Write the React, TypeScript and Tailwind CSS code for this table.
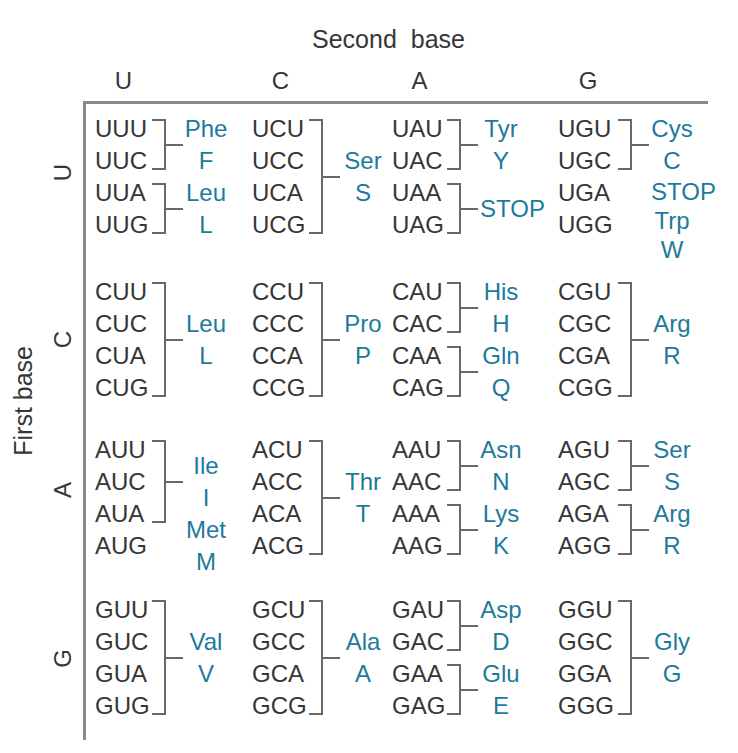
import React from 'react';

type G = { c: string[]; aa: string[]; b?: boolean; top?: boolean };

const H: Record<number, string> = {
  1: 'h-[32px]',
  2: 'h-[64px]',
  3: 'h-[96px]',
  4: 'h-[128px]',
};

const data: G[][][] = [
  [
    [
      { c: ['UUU', 'UUC'], aa: ['Phe', 'F'] },
      { c: ['UUA', 'UUG'], aa: ['Leu', 'L'] },
    ],
    [{ c: ['UCU', 'UCC', 'UCA', 'UCG'], aa: ['Ser', 'S'] }],
    [
      { c: ['UAU', 'UAC'], aa: ['Tyr', 'Y'] },
      { c: ['UAA', 'UAG'], aa: ['STOP'] },
    ],
    [
      { c: ['UGU', 'UGC'], aa: ['Cys', 'C'] },
      { c: ['UGA', 'UGG'], aa: ['STOP', 'Trp', 'W'], b: false, top: true },
    ],
  ],
  [
    [{ c: ['CUU', 'CUC', 'CUA', 'CUG'], aa: ['Leu', 'L'] }],
    [{ c: ['CCU', 'CCC', 'CCA', 'CCG'], aa: ['Pro', 'P'] }],
    [
      { c: ['CAU', 'CAC'], aa: ['His', 'H'] },
      { c: ['CAA', 'CAG'], aa: ['Gln', 'Q'] },
    ],
    [{ c: ['CGU', 'CGC', 'CGA', 'CGG'], aa: ['Arg', 'R'] }],
  ],
  [
    [
      { c: ['AUU', 'AUC', 'AUA'], aa: ['Ile', 'I'] },
      { c: ['AUG'], aa: ['Met', 'M'], b: false },
    ],
    [{ c: ['ACU', 'ACC', 'ACA', 'ACG'], aa: ['Thr', 'T'] }],
    [
      { c: ['AAU', 'AAC'], aa: ['Asn', 'N'] },
      { c: ['AAA', 'AAG'], aa: ['Lys', 'K'] },
    ],
    [
      { c: ['AGU', 'AGC'], aa: ['Ser', 'S'] },
      { c: ['AGA', 'AGG'], aa: ['Arg', 'R'] },
    ],
  ],
  [
    [{ c: ['GUU', 'GUC', 'GUA', 'GUG'], aa: ['Val', 'V'] }],
    [{ c: ['GCU', 'GCC', 'GCA', 'GCG'], aa: ['Ala', 'A'] }],
    [
      { c: ['GAU', 'GAC'], aa: ['Asp', 'D'] },
      { c: ['GAA', 'GAG'], aa: ['Glu', 'E'] },
    ],
    [{ c: ['GGU', 'GGC', 'GGA', 'GGG'], aa: ['Gly', 'G'] }],
  ],
];

const codonW = ['w-[57px]', 'w-[57px]', 'w-[55px]', 'w-[60px]'];
const rowMt = ['', 'mt-[35px]', 'mt-[30px]', 'mt-[32px]'];
const bases = ['U', 'C', 'A', 'G'];
const labelPad = ['pb-[8px]', '', 'pb-[16px]', ''];

function Group({ g, cw }: { g: G; cw: string }) {
  const n = g.c.length;
  const bracket = g.b !== false;
  return (
    <div className={`flex shrink-0 ${H[n]}`}>
      <div className={`${cw} flex flex-col text-[#363636]`}>
        {g.c.map((c) => (
          <div key={c} className="h-[32px] leading-[32px] whitespace-nowrap">
            {c}
          </div>
        ))}
      </div>
      <div className="w-[14px] pt-[6px] pb-[7px]">
        {bracket && <div className="h-full border-y-2 border-r-2 border-[#676767]" />}
      </div>
      <div className="w-[17px] flex items-center">
        {bracket && <div className="h-[2px] w-full bg-[#676767]" />}
      </div>
      <div
        className={`w-[46px] flex flex-col items-center ${
          g.top ? 'justify-start' : 'justify-center'
        } text-[#1d7a9b]`}
      >
        {g.aa.map((a) => (
          <div
            key={a}
            className={`shrink-0 whitespace-nowrap ${
              g.top ? 'h-[29px] leading-[29px]' : 'h-[32px] leading-[32px]'
            } ${a === 'STOP' ? 'self-start ml-[2px]' : ''}`}
          >
            {a}
          </div>
        ))}
      </div>
    </div>
  );
}

export default function App() {
  return (
    <div className="w-[738px] h-[753px] bg-white overflow-hidden font-['Liberation_Sans',Arial,Helvetica,sans-serif] text-[24px] text-[#363636]">
      <div className="pt-[23px] pl-[312px] flex gap-[14px] text-[25px] leading-[32px] h-[55px]">
        <span>Second</span>
        <span>base</span>
      </div>
      <div className="mt-[10px] ml-[86px] pl-[9px] grid grid-cols-[157px_140px_166px_150px] h-[32px] leading-[32px]">
        {bases.map((b, i) => (
          <div key={b} className={`${codonW[i]} text-center`}>
            {b}
          </div>
        ))}
      </div>
      <div className="mt-[4px] flex">
        <div className="w-[83px] h-[639px] flex">
          <div className="w-[46px] pt-[245px] flex justify-center items-start">
            <span className="[writing-mode:vertical-rl] rotate-180 text-[25px] leading-[28px] whitespace-nowrap">
              First base
            </span>
          </div>
          <div className="w-[34px] pt-[12px] flex flex-col">
            {bases.map((b, i) => (
              <div
                key={b}
                className={`h-[128px] flex items-center justify-center ${rowMt[i]} ${labelPad[i]}`}
              >
                <span className="[writing-mode:vertical-rl] rotate-180 leading-[24px]">{b}</span>
              </div>
            ))}
          </div>
        </div>
        <div className="w-[625px] h-[639px] border-t-[3px] border-l-[3px] border-[#8a8a8a] pl-[9px] pt-[9px]">
          {data.map((row, ri) => (
            <div
              key={ri}
              className={`grid grid-cols-[157px_140px_166px_150px] h-[128px] ${rowMt[ri]}`}
            >
              {row.map((cell, ci) => (
                <div key={ci} className="flex flex-col">
                  {cell.map((g, gi) => (
                    <Group key={gi} g={g} cw={codonW[ci]} />
                  ))}
                </div>
              ))}
            </div>
          ))}
        </div>
      </div>
    </div>
  );
}
